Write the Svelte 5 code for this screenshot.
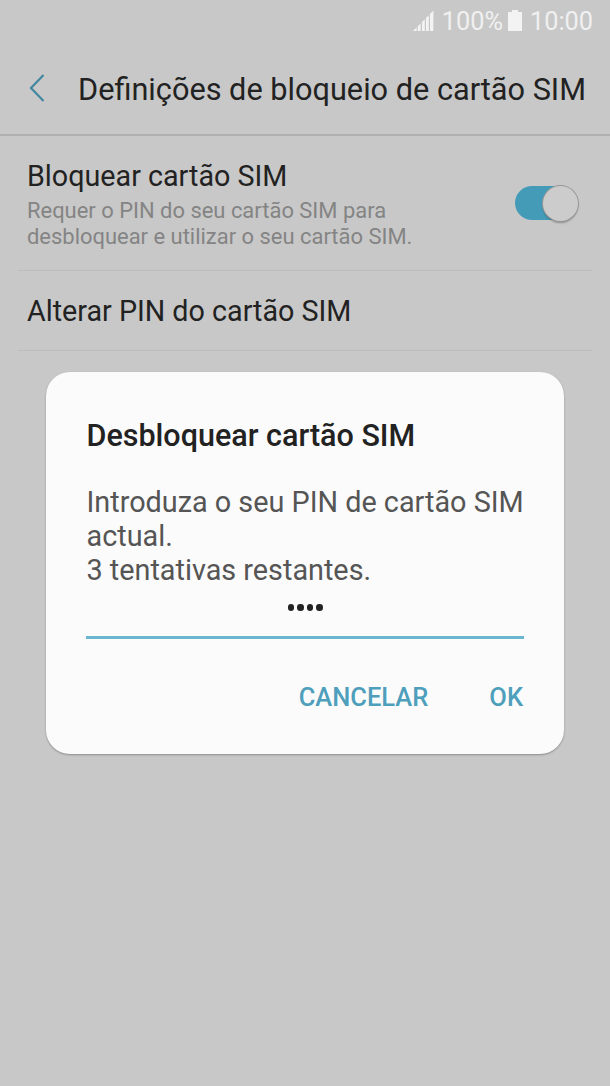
<script>
  let pin = "1234";
  let simLocked = true;

  const attempts = 3;
</script>

<div class="phone">
  <div class="status-bar">
    <svg class="signal" width="21" height="21" viewBox="0 0 21 21">
      <path d="M0 21 L3.6 17.4 V21 Z M4.8 16.2 L7.6 13.4 V21 H4.8 Z M9 12 L11.8 9.2 V21 H9 Z M13 8 L15.8 5.2 V21 H13 Z M17 4 L20.4 0.6 V21 H17 Z" />
    </svg>
    <span class="percent">100%</span>
    <svg class="battery" width="14" height="21" viewBox="0 0 14 21">
      <path d="M4 0 H10 V2 H14 V21 H0 V2 H4 Z" />
    </svg>
    <span class="clock">10:00</span>
  </div>

  <header class="header">
    <svg class="back" width="17" height="28" viewBox="0 0 17 28">
      <path d="M14.5 1 L2 14 L14.5 27" />
    </svg>
    <h1>Definições de bloqueio de cartão SIM</h1>
  </header>

  <div class="row lock-row">
    <div class="row-text">
      <h2>Bloquear cartão SIM</h2>
      <p>Requer o PIN do seu cartão SIM para desbloquear e utilizar o seu cartão SIM.</p>
    </div>
    <div class="switch" class:on={simLocked}>
      <div class="thumb"></div>
    </div>
  </div>

  <div class="row change-row">
    <h2>Alterar PIN do cartão SIM</h2>
  </div>

  <div class="dialog">
    <h3>Desbloquear cartão SIM</h3>
    <p class="message">
      Introduza o seu PIN de cartão SIM actual.<br />
      {attempts} tentativas restantes.
    </p>

    <div class="pin-field">
      {#each pin as digit}
        <span class="dot"></span>
      {/each}
    </div>

    <div class="actions">
      <button type="button">CANCELAR</button>
      <button type="button">OK</button>
    </div>
  </div>
</div>

<style>
  :global(body) {
    background: #c8c8c8;
  }

  .phone {
    position: relative;
    height: 1086px;
    overflow: hidden;
    background: #c8c8c8;
    color: #222222;
    font-family: Roboto, "Liberation Sans", sans-serif;
  }

  h1,
  h2,
  h3,
  p {
    margin: 0;
    font-weight: 400;
  }

  h1,
  h2 {
    line-height: 34px;
    white-space: nowrap;
  }

  h1 {
    font-size: 30.7px;
  }

  h2 {
    font-size: 28.7px;
  }

  .status-bar {
    display: flex;
    justify-content: flex-end;
    align-items: center;
    height: 42px;
    padding-right: 17px;
    color: #f0f0f0;
    font-size: 25.3px;
    line-height: 42px;
  }

  .status-bar svg {
    margin-top: -2px;
    fill: #f3f3f3;
  }

  .percent {
    margin: 2px 5px 0 8px;
  }

  .clock {
    margin: 2px 0 0 8px;
  }

  .header {
    display: flex;
    align-items: center;
    height: 92px;
    padding-left: 29px;
    border-bottom: 2px solid #b1b1b1;
  }

  .header h1 {
    margin: 3px 0 0 32px;
  }

  .back path {
    fill: none;
    stroke: #43869f;
    stroke-width: 2.2;
  }

  .row {
    display: flex;
    justify-content: space-between;
    margin: 0 18px;
    padding: 0 14px 0 9px;
    border-bottom: 1px solid #bcbcbc;
  }

  .lock-row {
    height: 134px;
  }

  .row-text {
    width: 400px;
    padding-top: 23px;
  }

  .row-text p {
    margin-top: 5px;
    color: #848484;
    font-size: 21.95px;
    line-height: 25.6px;
  }

  .change-row {
    align-items: center;
    height: 78px;
    padding-top: 1px;
  }

  .switch {
    display: flex;
    align-items: center;
    width: 63px;
    height: 34px;
    margin-top: 50px;
    border-radius: 17px;
    background: #a5a5a5;
  }

  .switch.on {
    justify-content: flex-end;
    background: linear-gradient(to right, #449bb8 48px, transparent 48px);
  }

  .thumb {
    width: 35px;
    height: 35px;
    flex: none;
    border-radius: 50%;
    background: #cccccc;
    box-shadow: 0 0 0 1px #989898, 0 2px 2px rgba(0, 0, 0, 0.3);
  }

  .dialog {
    position: absolute;
    top: 372px;
    left: 46px;
    box-sizing: border-box;
    width: 518px;
    height: 382px;
    padding: 47px 40px 0;
    border-radius: 24px;
    background: #fbfbfb;
    box-shadow: 0 1px 2px rgba(0, 0, 0, 0.3);
  }

  .dialog h3 {
    margin-left: 0.5px;
    font-size: 30.5px;
    line-height: 34px;
    font-weight: 500;
  }

  .message {
    margin: 32px -8px 0 0.5px;
    color: #555555;
    font-size: 28.8px;
    line-height: 34px;
  }

  .pin-field {
    display: flex;
    justify-content: center;
    gap: 3px;
    height: 32px;
    padding-top: 17px;
    border-bottom: 3px solid #6ab5cf;
  }

  .dot {
    width: 6.5px;
    height: 6.5px;
    border-radius: 50%;
    background: #222222;
  }

  .actions {
    display: flex;
    justify-content: flex-end;
    gap: 61px;
    margin: 41px 1px 0 0;
  }

  .actions button {
    padding: 0;
    border: 0;
    background: none;
    color: #4e9fbc;
    font-family: inherit;
    font-size: 25.5px;
    line-height: 34px;
    font-weight: 500;
  }
</style>
